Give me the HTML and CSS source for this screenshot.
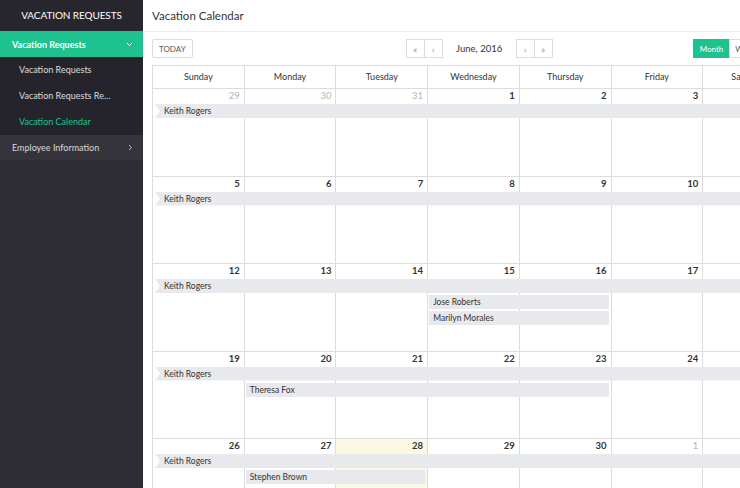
FILE: index.html
```html
<!DOCTYPE html>
<html lang="en">
<head>
    <meta charset="UTF-8">
    <title>Vacation Calendar</title>
    <link rel="stylesheet" href="styles.css">
</head>
<body>
    <div class="app">
        <aside class="sidebar">
            <div class="brand">VACATION REQUESTS</div>
            <div class="menu-item active">
                <span>Vacation Requests</span>
                <svg width="7" height="5" viewBox="0 0 7 5"><polyline points="1,1 3.5,3.5 6,1" fill="none" stroke="#fff" stroke-width="1"/></svg>
            </div>
            <div class="submenu">
                <div class="sub-item">Vacation Requests</div>
                <div class="sub-item">Vacation Requests Re...</div>
                <div class="sub-item current">Vacation Calendar</div>
            </div>
            <div class="menu-item alt">
                <span>Employee Information</span>
                <svg width="5" height="7" viewBox="0 0 5 7"><polyline points="1,1 3.5,3.5 1,6" fill="none" stroke="#bbb" stroke-width="1"/></svg>
            </div>
        </aside>

        <main class="main">
            <header class="page-header">Vacation Calendar</header>
            <div class="content">
                <!-- Toolbar -->
                <div class="toolbar">
                    <button class="btn">TODAY</button>
                    <div class="nav">
                        <button class="btn icon">&laquo;</button>
                        <button class="btn icon">&lsaquo;</button>
                        <span class="month-label">June, 2016</span>
                        <button class="btn icon">&rsaquo;</button>
                        <button class="btn icon">&raquo;</button>
                    </div>
                    <div class="views">
                        <button class="btn view selected">Month</button>
                        <button class="btn view">Week</button>
                        <button class="btn view">Day</button>
                    </div>
                </div>

                <!-- Calendar -->
                <div class="calendar">
                    <div class="cal-head">
                        <div>Sunday</div>
                        <div>Monday</div>
                        <div>Tuesday</div>
                        <div>Wednesday</div>
                        <div>Thursday</div>
                        <div>Friday</div>
                        <div>Saturday</div>
                    </div>

                    <div class="week">
                        <div class="cell other">29</div>
                        <div class="cell other">30</div>
                        <div class="cell other">31</div>
                        <div class="cell">1</div>
                        <div class="cell">2</div>
                        <div class="cell">3</div>
                        <div class="cell">4</div>
                        <div class="event cont row-1 span-all">Keith Rogers</div>
                    </div>

                    <div class="week">
                        <div class="cell">5</div>
                        <div class="cell">6</div>
                        <div class="cell">7</div>
                        <div class="cell">8</div>
                        <div class="cell">9</div>
                        <div class="cell">10</div>
                        <div class="cell">11</div>
                        <div class="event cont row-1 span-all">Keith Rogers</div>
                    </div>

                    <div class="week">
                        <div class="cell">12</div>
                        <div class="cell">13</div>
                        <div class="cell">14</div>
                        <div class="cell">15</div>
                        <div class="cell">16</div>
                        <div class="cell">17</div>
                        <div class="cell">18</div>
                        <div class="event cont row-1 span-all">Keith Rogers</div>
                        <div class="event row-2 wed-thu">Jose Roberts</div>
                        <div class="event row-3 wed-thu">Marilyn Morales</div>
                    </div>

                    <div class="week">
                        <div class="cell">19</div>
                        <div class="cell">20</div>
                        <div class="cell">21</div>
                        <div class="cell">22</div>
                        <div class="cell">23</div>
                        <div class="cell">24</div>
                        <div class="cell">25</div>
                        <div class="event cont row-1 span-all">Keith Rogers</div>
                        <div class="event row-2 mon-thu">Theresa Fox</div>
                    </div>

                    <div class="week">
                        <div class="cell">26</div>
                        <div class="cell">27</div>
                        <div class="cell today">28</div>
                        <div class="cell">29</div>
                        <div class="cell">30</div>
                        <div class="cell other">1</div>
                        <div class="cell other">2</div>
                        <div class="event cont row-1 span-all">Keith Rogers</div>
                        <div class="event row-2 mon-tue">Stephen Brown</div>
                    </div>
                </div>
            </div>
        </main>
    </div>
</body>
</html>
```

FILE: styles.css
```css
/* General Styles */
html, body {
    margin: 0;
    padding: 0;
    height: 100%;
    overflow: hidden;
}

body {
    font-family: 'Lato', 'Open Sans', sans-serif;
    background-color: #ffffff;
    color: #333;
}

.app {
    display: flex;
    height: 100vh;
}

/* Sidebar */
.sidebar {
    width: 143px;
    flex-shrink: 0;
    background-color: #2e2d36;
    color: #e6e6e6;
    font-size: 9px;
}

.brand {
    height: 31px;
    line-height: 31px;
    background-color: #27262e;
    color: #fff;
    font-size: 10px;
    text-align: center;
    letter-spacing: -0.1px;
}

.menu-item {
    height: 26px;
    display: flex;
    align-items: center;
    justify-content: space-between;
    padding: 0 10px 0 12px;
}

.menu-item.active {
    background-color: #1ec28f;
    color: #fff;
    font-weight: bold;
}

.menu-item.alt {
    height: 25px;
    background-color: #35343d;
    color: #d8d8d8;
}

.submenu {
    background-color: #25242c;
}

.sub-item {
    height: 26px;
    line-height: 26px;
    padding-left: 19px;
    color: #dcdcdc;
}

.sub-item.current {
    color: #1ec28f;
}

/* Main area */
.main {
    flex: 1;
    min-width: 0;
    overflow: hidden;
}

.page-header {
    height: 32px;
    line-height: 31px;
    padding-left: 9px;
    font-size: 11.5px;
    color: #333;
    border-bottom: 1px solid #ececec;
    box-sizing: border-box;
}

.content {
    padding-left: 9px;
    width: 642px;
}

/* Toolbar */
.toolbar {
    display: flex;
    align-items: center;
    margin-top: 7px;
    height: 19px;
}

.btn {
    height: 19px;
    padding: 0 6px;
    background-color: #fff;
    border: 1px solid #dcdcdc;
    border-radius: 2px;
    font-family: inherit;
    font-size: 8px;
    color: #555;
    cursor: pointer;
}

.nav {
    display: flex;
    align-items: center;
    margin-left: 213px;
}

.btn.icon {
    width: 19px;
    padding: 0;
    font-size: 10px;
    color: #999;
    border-radius: 0;
}

.btn.icon + .btn.icon {
    margin-left: -1px;
}

.month-label {
    width: 73px;
    text-align: center;
    font-size: 9.5px;
    color: #333;
}

.views {
    display: flex;
    margin-left: auto;
}

.btn.view {
    border-radius: 0;
    margin-left: -1px;
    width: 33px;
    padding: 0;
}

.btn.view.selected {
    width: 37px;
    background-color: #1ec28f;
    border-color: #1ec28f;
    color: #fff;
}

/* Calendar */
.calendar {
    margin-top: 7px;
    width: 642px;
    border-right: 1px solid #dcdcdc;
}

.cal-head,
.week {
    display: grid;
    grid-template-columns: repeat(7, 1fr);
    border-top: 1px solid #dcdcdc;
}

.cal-head div {
    height: 22px;
    line-height: 22px;
    text-align: center;
    font-size: 9px;
    color: #333;
    border-left: 1px solid #dcdcdc;
}

.week {
    height: 87.5px;
    box-sizing: border-box;
    grid-template-rows: 15px 16px 16px 16px 1fr;
}

.cell {
    grid-row: 1 / -1;
    border-left: 1px solid #dcdcdc;
    padding-right: 4px;
    text-align: right;
    font-size: 9.5px;
    font-weight: bold;
    line-height: 14px;
    color: #333;
}

.cell:nth-child(1) { grid-column: 1; }
.cell:nth-child(2) { grid-column: 2; }
.cell:nth-child(3) { grid-column: 3; }
.cell:nth-child(4) { grid-column: 4; }
.cell:nth-child(5) { grid-column: 5; }
.cell:nth-child(6) { grid-column: 6; }
.cell:nth-child(7) { grid-column: 7; }

.cell.other {
    color: #b5b5b5;
    font-weight: normal;
}

.cell.today {
    background-color: #fdf8e4;
}

.event {
    height: 14px;
    line-height: 14px;
    margin: 0 2px 2px 2px;
    padding-left: 4px;
    background-color: #e7e9ed;
    font-size: 8.5px;
    color: #333;
}

.event.cont {
    margin-left: 3px;
    padding-left: 9px;
    clip-path: polygon(0 0, 100% 0, 100% 100%, 0 100%, 5px 50%);
}

.row-1 { grid-row: 2; }
.row-2 { grid-row: 3; }
.row-3 { grid-row: 4; }

.span-all { grid-column: 1 / 8; margin-right: 0; }
.wed-thu { grid-column: 4 / 6; }
.mon-thu { grid-column: 2 / 6; }
.mon-tue { grid-column: 2 / 4; }
```
